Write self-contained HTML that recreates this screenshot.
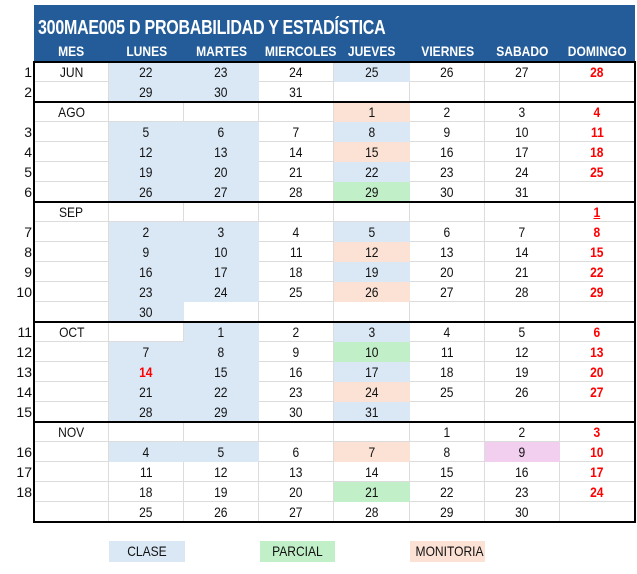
<!DOCTYPE html>
<html><head><meta charset="utf-8"><style>
body{margin:0;width:637px;height:574px;background:#fff;position:relative;font-family:"Liberation Sans",sans-serif;overflow:hidden}
#hdr{position:absolute;left:34px;top:5px;width:601px;height:56px;background:#245c99;color:#fff}
#title{position:absolute;left:4px;top:12px;font-weight:bold;font-size:20px;white-space:nowrap;transform:scaleX(.8);transform-origin:0 0;letter-spacing:-0.3px}
.h{position:absolute;top:38px;font-weight:bold;font-size:14px;text-align:center;white-space:nowrap}
.h span,.c span,.lg span{display:inline-block;transform:scaleX(.86)}
#g{position:absolute;left:33px;top:62px;width:599px;border-left:2px solid #000;border-right:2px solid #000;display:grid;grid-template-columns:74px 75px 75px 75px 76px 75px 75px 74px;grid-auto-rows:20px}
.c{box-sizing:border-box;border-right:1px solid #dcdcdc;border-bottom:1px solid #dcdcdc;text-align:center;font-size:14px;color:#111;line-height:20px;white-space:nowrap}
.c:nth-child(8n){border-right:none}
.b{background:#dae8f6;border-color:#dae8f6}
.p{background:#fbe2d5;border-color:#fbe2d5}
.g{background:#c1f0c8;border-color:#c1f0c8}
.k{background:#f2ceef;border-color:#f2ceef}
.r{color:#f00;font-weight:bold}
.tl{position:absolute;left:33px;width:603px;height:2px;background:#000}
.w{position:absolute;left:0;width:32px;text-align:right;font-size:14px;color:#111;line-height:20px}
.lg{position:absolute;top:541px;height:21px;line-height:21px;text-align:center;font-size:14px;color:#111}
</style></head><body>
<div id="hdr"><div id="title">300MAE005 D PROBABILIDAD Y ESTADÍSTICA</div>
<div class="h" style="left:0;width:75px"><span>MES</span></div>
<div class="h" style="left:75px;width:75px"><span>LUNES</span></div>
<div class="h" style="left:150px;width:75px"><span>MARTES</span></div>
<div class="h" style="left:225px;width:75px"><span>MIERCOLES</span></div>
<div class="h" style="left:300px;width:76px"><span>JUEVES</span></div>
<div class="h" style="left:376px;width:75px"><span>VIERNES</span></div>
<div class="h" style="left:451px;width:75px"><span>SABADO</span></div>
<div class="h" style="left:526px;width:75px"><span>DOMINGO</span></div>
</div>
<div class="w" style="top:62px">1</div><div class="w" style="top:82px">2</div>
<div class="w" style="top:122px">3</div><div class="w" style="top:142px">4</div><div class="w" style="top:162px">5</div><div class="w" style="top:182px">6</div>
<div class="w" style="top:222px">7</div><div class="w" style="top:242px">8</div><div class="w" style="top:262px">9</div><div class="w" style="top:282px">10</div>
<div class="w" style="top:322px">11</div><div class="w" style="top:342px">12</div><div class="w" style="top:362px">13</div><div class="w" style="top:382px">14</div><div class="w" style="top:402px">15</div>
<div class="w" style="top:442px">16</div><div class="w" style="top:462px">17</div><div class="w" style="top:482px">18</div>
<div id="g">
<div class="c"><span>JUN</span></div><div class="c b"><span>22</span></div><div class="c b"><span>23</span></div><div class="c"><span>24</span></div><div class="c b"><span>25</span></div><div class="c"><span>26</span></div><div class="c"><span>27</span></div><div class="c r"><span>28</span></div>
<div class="c"></div><div class="c b"><span>29</span></div><div class="c b"><span>30</span></div><div class="c"><span>31</span></div><div class="c"></div><div class="c"></div><div class="c"></div><div class="c"></div>
<div class="c"><span>AGO</span></div><div class="c"></div><div class="c"></div><div class="c"></div><div class="c p"><span>1</span></div><div class="c"><span>2</span></div><div class="c"><span>3</span></div><div class="c r"><span>4</span></div>
<div class="c"></div><div class="c b"><span>5</span></div><div class="c b"><span>6</span></div><div class="c"><span>7</span></div><div class="c b"><span>8</span></div><div class="c"><span>9</span></div><div class="c"><span>10</span></div><div class="c r"><span>11</span></div>
<div class="c"></div><div class="c b"><span>12</span></div><div class="c b"><span>13</span></div><div class="c"><span>14</span></div><div class="c p"><span>15</span></div><div class="c"><span>16</span></div><div class="c"><span>17</span></div><div class="c r"><span>18</span></div>
<div class="c"></div><div class="c b"><span>19</span></div><div class="c b"><span>20</span></div><div class="c"><span>21</span></div><div class="c b"><span>22</span></div><div class="c"><span>23</span></div><div class="c"><span>24</span></div><div class="c r"><span>25</span></div>
<div class="c"></div><div class="c b"><span>26</span></div><div class="c b"><span>27</span></div><div class="c"><span>28</span></div><div class="c g"><span>29</span></div><div class="c"><span>30</span></div><div class="c"><span>31</span></div><div class="c"></div>
<div class="c"><span>SEP</span></div><div class="c"></div><div class="c"></div><div class="c"></div><div class="c"></div><div class="c"></div><div class="c"></div><div class="c r"><span style="text-decoration:underline">1</span></div>
<div class="c"></div><div class="c b"><span>2</span></div><div class="c b"><span>3</span></div><div class="c"><span>4</span></div><div class="c b"><span>5</span></div><div class="c"><span>6</span></div><div class="c"><span>7</span></div><div class="c r"><span>8</span></div>
<div class="c"></div><div class="c b"><span>9</span></div><div class="c b"><span>10</span></div><div class="c"><span>11</span></div><div class="c p"><span>12</span></div><div class="c"><span>13</span></div><div class="c"><span>14</span></div><div class="c r"><span>15</span></div>
<div class="c"></div><div class="c b"><span>16</span></div><div class="c b"><span>17</span></div><div class="c"><span>18</span></div><div class="c b"><span>19</span></div><div class="c"><span>20</span></div><div class="c"><span>21</span></div><div class="c r"><span>22</span></div>
<div class="c"></div><div class="c b"><span>23</span></div><div class="c b"><span>24</span></div><div class="c"><span>25</span></div><div class="c p"><span>26</span></div><div class="c"><span>27</span></div><div class="c"><span>28</span></div><div class="c r"><span>29</span></div>
<div class="c"></div><div class="c b"><span>30</span></div><div class="c"></div><div class="c"></div><div class="c"></div><div class="c"></div><div class="c"></div><div class="c"></div>
<div class="c"><span>OCT</span></div><div class="c"></div><div class="c b"><span>1</span></div><div class="c"><span>2</span></div><div class="c b"><span>3</span></div><div class="c"><span>4</span></div><div class="c"><span>5</span></div><div class="c r"><span>6</span></div>
<div class="c"></div><div class="c b"><span>7</span></div><div class="c b"><span>8</span></div><div class="c"><span>9</span></div><div class="c g"><span>10</span></div><div class="c"><span>11</span></div><div class="c"><span>12</span></div><div class="c r"><span>13</span></div>
<div class="c"></div><div class="c b r"><span>14</span></div><div class="c b"><span>15</span></div><div class="c"><span>16</span></div><div class="c b"><span>17</span></div><div class="c"><span>18</span></div><div class="c"><span>19</span></div><div class="c r"><span>20</span></div>
<div class="c"></div><div class="c b"><span>21</span></div><div class="c b"><span>22</span></div><div class="c"><span>23</span></div><div class="c p"><span>24</span></div><div class="c"><span>25</span></div><div class="c"><span>26</span></div><div class="c r"><span>27</span></div>
<div class="c"></div><div class="c b"><span>28</span></div><div class="c b"><span>29</span></div><div class="c"><span>30</span></div><div class="c b"><span>31</span></div><div class="c"></div><div class="c"></div><div class="c"></div>
<div class="c"><span>NOV</span></div><div class="c"></div><div class="c"></div><div class="c"></div><div class="c"></div><div class="c"><span>1</span></div><div class="c"><span>2</span></div><div class="c r"><span>3</span></div>
<div class="c"></div><div class="c b"><span>4</span></div><div class="c b"><span>5</span></div><div class="c"><span>6</span></div><div class="c p"><span>7</span></div><div class="c"><span>8</span></div><div class="c k"><span>9</span></div><div class="c r"><span>10</span></div>
<div class="c"></div><div class="c"><span>11</span></div><div class="c"><span>12</span></div><div class="c"><span>13</span></div><div class="c"><span>14</span></div><div class="c"><span>15</span></div><div class="c"><span>16</span></div><div class="c r"><span>17</span></div>
<div class="c"></div><div class="c"><span>18</span></div><div class="c"><span>19</span></div><div class="c"><span>20</span></div><div class="c g"><span>21</span></div><div class="c"><span>22</span></div><div class="c"><span>23</span></div><div class="c r"><span>24</span></div>
<div class="c"></div><div class="c"><span>25</span></div><div class="c"><span>26</span></div><div class="c"><span>27</span></div><div class="c"><span>28</span></div><div class="c"><span>29</span></div><div class="c"><span>30</span></div><div class="c"></div>
</div>
<div class="tl" style="top:61px"></div><div class="tl" style="top:101px"></div><div class="tl" style="top:201px"></div><div class="tl" style="top:321px"></div><div class="tl" style="top:421px"></div><div class="tl" style="top:521px"></div>
<div class="lg" style="left:109px;width:76px;background:#dae8f6"><span>CLASE</span></div>
<div class="lg" style="left:260px;width:75px;background:#c1f0c8"><span>PARCIAL</span></div>
<div class="lg" style="left:410px;width:75px;background:#fbe2d5"><span>MONITORIA</span></div>
</body></html>
